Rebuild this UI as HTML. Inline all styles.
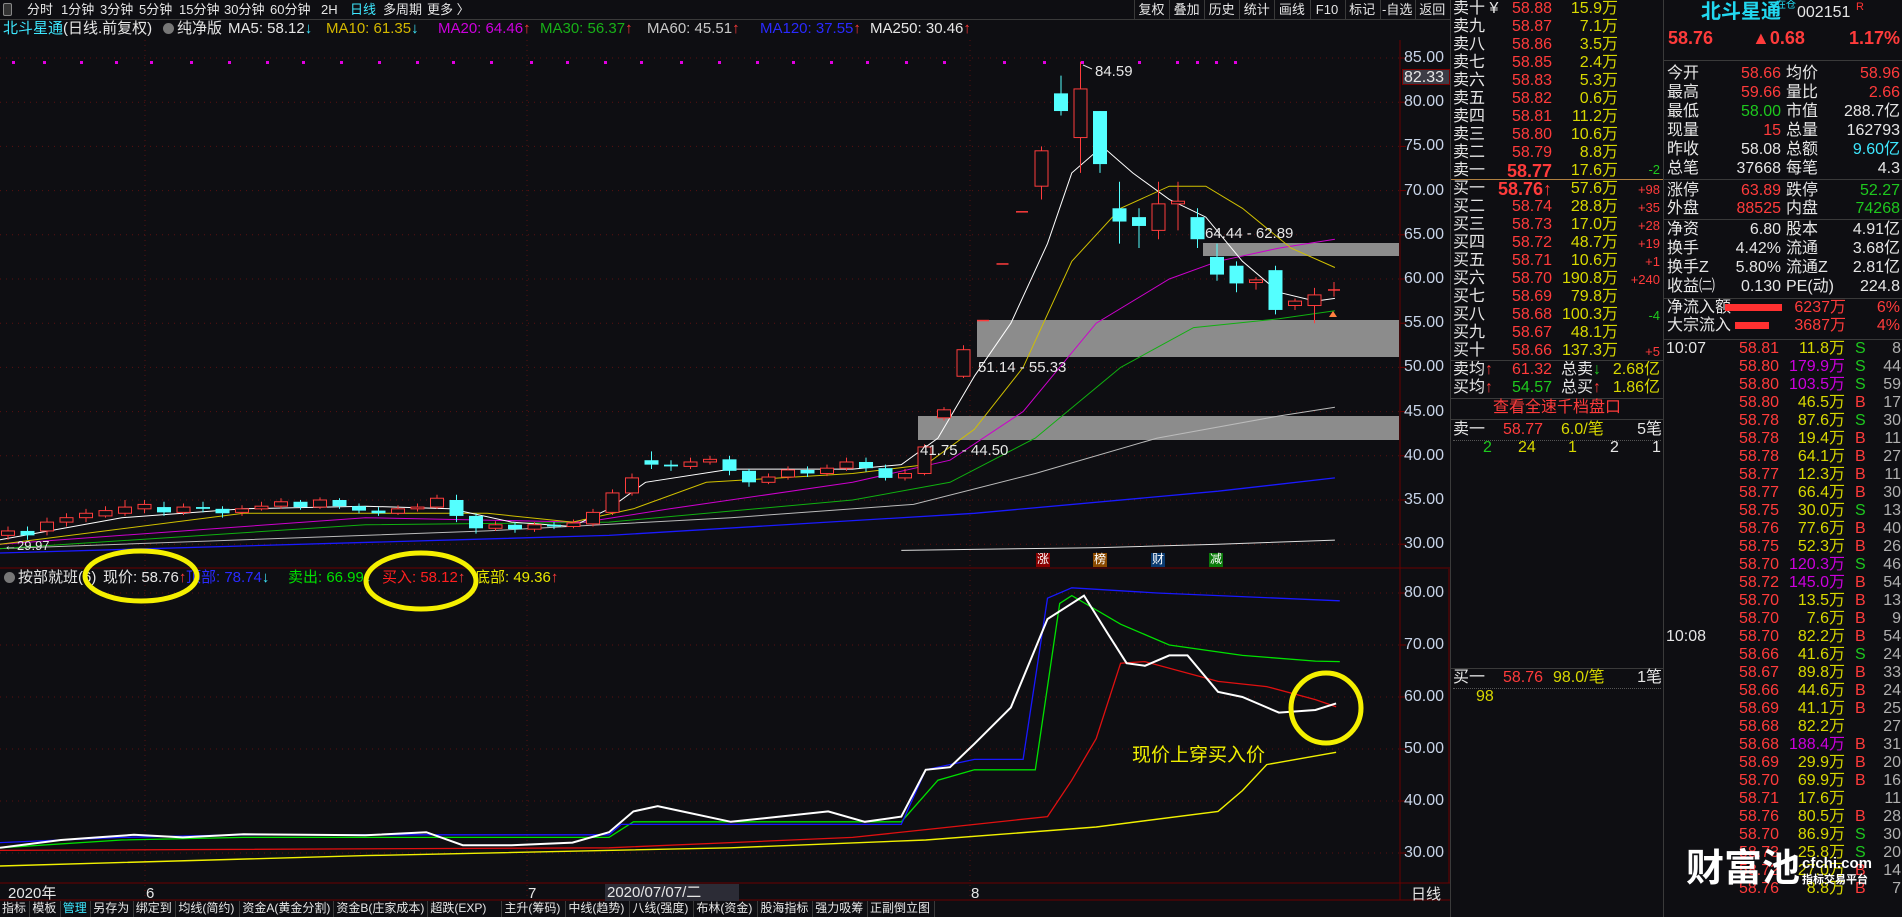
<!DOCTYPE html>
<html><head><meta charset="utf-8">
<style>
*{margin:0;padding:0;box-sizing:border-box}
body{width:1902px;height:917px;background:#0e0e12;overflow:hidden;position:relative;font-family:"Liberation Sans","Noto Sans CJK SC",sans-serif;color:#d0d0d0}
.a{position:absolute;white-space:nowrap;line-height:1}
.t13{font-size:13px}.t15{font-size:15px}.t16{font-size:16px}
.r{text-align:right}
.W{color:#e6e6e6}.R{color:#ff3b3b}.Y{color:#d8d800}.G{color:#1ec81e}.C{color:#3ee8ff}.M{color:#cc00dd}.B{color:#2a2aff}.GR{color:#b0b0b0}
.hl{position:absolute;height:1px;background:#3a3a3a}
.vl{position:absolute;width:1px;background:#3a3a3a}
</style></head><body>
<svg id="ch" class="a" style="left:0;top:0" width="1902" height="917"></svg>

<div class="a" style="left:3px;top:3px;width:9px;height:13px;border:1px solid #888;border-radius:2px;background:#333"></div>
<div class="a t13 W" style="left:27px;top:3px">分时</div>
<div class="a t13 W" style="left:61px;top:3px">1分钟</div>
<div class="a t13 W" style="left:100px;top:3px">3分钟</div>
<div class="a t13 W" style="left:139px;top:3px">5分钟</div>
<div class="a t13 W" style="left:179px;top:3px">15分钟</div>
<div class="a t13 W" style="left:224px;top:3px">30分钟</div>
<div class="a t13 W" style="left:270px;top:3px">60分钟</div>
<div class="a t13 W" style="left:321px;top:3px">2H</div>
<div class="a t13 C" style="left:350px;top:3px">日线</div>
<div class="a t13 W" style="left:383px;top:3px">多周期</div>
<div class="a t13 W" style="left:427px;top:3px">更多 〉</div>
<div id="btns"></div>
<div class="hl" style="left:0;top:19px;width:1450px"></div>

<div class="a t15" style="left:3px;top:21px"><span class="C">北斗星通</span><span class="W">(日线.前复权)</span></div>
<div class="a" style="left:163px;top:23px;width:11px;height:11px;border-radius:50%;background:#777"></div>
<div class="a t15 W" style="left:177px;top:21px">纯净版</div>
<div class="a t15" style="left:228px;top:21px"><span class="W">MA5: 58.12</span><span class="C">↓</span></div>
<div class="a t15" style="left:326px;top:21px"><span style="color:#d4b800">MA10: 61.35</span><span class="C">↓</span></div>
<div class="a t15" style="left:438px;top:21px"><span class="M">MA20: 64.46</span><span class="R">↑</span></div>
<div class="a t15" style="left:540px;top:21px"><span style="color:#18b018">MA30: 56.37</span><span class="R">↑</span></div>
<div class="a t15" style="left:647px;top:21px"><span style="color:#c8c8c8">MA60: 45.51</span><span class="R">↑</span></div>
<div class="a t15" style="left:760px;top:21px"><span class="B">MA120: 37.55</span><span class="R">↑</span></div>
<div class="a t15" style="left:870px;top:21px"><span class="W">MA250: 30.46</span><span class="R">↑</span></div>

<div class="a t15 W" style="left:1095px;top:64px">84.59</div>
<div class="a t15 W" style="left:1205px;top:226px">64.44 - 62.89</div>
<div class="a t15 W" style="left:978px;top:360px">51.14 - 55.33</div>
<div class="a t15 W" style="left:920px;top:443px">41.75 - 44.50</div>
<div class="a t13 W" style="left:4px;top:539px">←29.97</div>
<div id="ax"></div>
<div class="a t16 W" style="left:1402px;top:69px;width:48px;height:16px;background:#3c3c46;border:1px solid #700;padding-left:1px">82.33</div>

<div class="a" style="left:1036px;top:553px;width:14px;height:14px;background:#8a0000;color:#fff;font-size:12px;text-align:center">涨</div>
<div class="a" style="left:1093px;top:553px;width:14px;height:14px;background:#8a4a00;color:#fff;font-size:12px;text-align:center">榜</div>
<div class="a" style="left:1151px;top:553px;width:14px;height:14px;background:#0a3a70;color:#fff;font-size:12px;text-align:center">财</div>
<div class="a" style="left:1209px;top:553px;width:14px;height:14px;background:#0a7a0a;color:#fff;font-size:12px;text-align:center">减</div>

<div class="a" style="left:4px;top:572px;width:11px;height:11px;border-radius:50%;background:#777"></div>
<div class="a t15 W" style="left:18px;top:570px">按部就班(6)</div>
<div class="a t15" style="left:103px;top:570px"><span class="W">现价: 58.76</span><span class="R">↑</span></div>
<div class="a t15" style="left:186px;top:570px"><span class="B">顶部: 78.74</span><span class="C">↓</span></div>
<div class="a t15" style="left:288px;top:570px"><span style="color:#00e000">卖出: 66.99</span><span class="C">↓</span></div>
<div class="a t15" style="left:382px;top:570px"><span style="color:#ff2020">买入: 58.12</span><span class="R">↑</span></div>
<div class="a t15" style="left:475px;top:570px"><span style="color:#e8e800">底部: 49.36</span><span class="R">↑</span></div>
<svg class="a" style="left:0;top:540px" width="560" height="100">
<ellipse cx="141" cy="36" rx="56" ry="25" fill="none" stroke="#f5f000" stroke-width="5"/>
<ellipse cx="421" cy="41" rx="55" ry="28" fill="none" stroke="#f5f000" stroke-width="5"/>
</svg>
<div class="a" style="left:1132px;top:746px;font-size:19px;color:#f0f000">现价上穿买入价</div>

<div class="a t15 W" style="left:8px;top:886px">2020年</div>
<div class="a t15 W" style="left:146px;top:886px">6</div>
<div class="a t15 W" style="left:528px;top:886px">7</div>
<div class="a t15 W" style="left:605px;top:884px;background:#2c2c36;padding:1px 2px;width:134px">2020/07/07/二</div>
<div class="a t15 W" style="left:971px;top:886px">8</div>
<div class="a t15 W" style="left:1411px;top:887px">日线</div>
<div id="tabs"></div>

<div class="vl" style="left:1450px;top:0;height:917px"></div>
<div class="vl" style="left:1663px;top:0;height:917px"></div>
<div id="ob"></div>
<div class="hl" style="left:1451px;top:179px;width:212px;background:#b08040"></div>
<div class="hl" style="left:1451px;top:360px;width:212px"></div>
<div class="hl" style="left:1451px;top:398px;width:212px"></div>
<div class="hl" style="left:1451px;top:419px;width:212px"></div>
<div class="a t16 R" style="left:1451px;top:400px;width:212px;text-align:center">查看全速千档盘口</div>
<div class="a t16 W" style="left:1453px;top:422px">卖一</div>
<div class="a t16 R r" style="left:1490px;top:422px;width:53px">58.77</div>
<div class="a t16 Y" style="left:1561px;top:422px">6.0/笔</div>
<div class="a t16 W r" style="left:1620px;top:422px;width:42px">5笔</div>
<div class="hl" style="left:1453px;top:440px;width:208px;background:none;border-top:1px dotted #555"></div>
<div class="a t16 G" style="left:1483px;top:440px">2</div>
<div class="a t16 Y" style="left:1518px;top:440px">24</div>
<div class="a t16 Y" style="left:1568px;top:440px">1</div>
<div class="a t16 W" style="left:1610px;top:440px">2</div>
<div class="a t16 W" style="left:1652px;top:440px">1</div>
<div class="hl" style="left:1451px;top:668px;width:212px"></div>
<div class="a t16 W" style="left:1453px;top:670px">买一</div>
<div class="a t16 R r" style="left:1490px;top:670px;width:53px">58.76</div>
<div class="a t16 Y" style="left:1553px;top:670px">98.0/笔</div>
<div class="a t16 W r" style="left:1620px;top:670px;width:42px">1笔</div>
<div class="hl" style="left:1453px;top:688px;width:208px;background:none;border-top:1px dotted #555"></div>
<div class="a t16 Y" style="left:1476px;top:689px">98</div>

<div class="a" style="left:1701px;top:2px;font-size:20px;font-weight:bold;color:#22d8f0">北斗星通</div>
<div class="a" style="left:1776px;top:1px;font-size:10px;color:#22d8f0">在仓</div>
<div class="a t16 W" style="left:1797px;top:5px">002151</div>
<div class="a" style="left:1856px;top:2px;font-size:11px;color:#f33">R</div>
<div class="a R" style="left:1668px;top:29px;font-size:18px;font-weight:bold">58.76</div>
<div class="a R" style="left:1752px;top:29px;font-size:18px;font-weight:bold">▲0.68</div>
<div class="a R r" style="left:1820px;top:29px;width:80px;font-size:18px;font-weight:bold">1.17%</div>
<div class="hl" style="left:1664px;top:60px;width:238px"></div>
<div class="hl" style="left:1664px;top:179px;width:238px"></div>
<div class="hl" style="left:1664px;top:219px;width:238px"></div>
<div class="hl" style="left:1664px;top:298px;width:238px"></div>
<div class="hl" style="left:1664px;top:339px;width:238px"></div>
<div id="info"></div>
<div class="a t16 W" style="left:1667px;top:300px">净流入额</div>
<div class="a" style="left:1725px;top:304px;width:57px;height:7px;background:#ff3030"></div>
<div class="a t16 R r" style="left:1780px;top:300px;width:66px">6237万</div>
<div class="a t16 R r" style="left:1860px;top:300px;width:40px">6%</div>
<div class="a t16 W" style="left:1667px;top:318px">大宗流入</div>
<div class="a" style="left:1735px;top:322px;width:34px;height:7px;background:#ff3030"></div>
<div class="a t16 R r" style="left:1780px;top:318px;width:66px">3687万</div>
<div class="a t16 R r" style="left:1860px;top:318px;width:40px">4%</div>
<div id="ticks"></div>
<div class="a" style="left:1686px;top:850px;font-size:38px;font-weight:bold;color:#fff">财富池</div>
<div class="a" style="left:1802px;top:856px;font-size:15px;font-weight:bold;color:#fff">cfchi.com</div>
<div class="a" style="left:1802px;top:875px;font-size:11px;font-weight:bold;color:#fff">指标交易平台</div>

<script>
var svg=document.getElementById('ch'),h='';
function P(p){return 58+(85-p)*8.84}
function I(v){return 593+(80-v)*5.2}
for(var p=85;p>=30;p-=5)h+='<line x1="0" x2="1399" y1="'+P(p)+'" y2="'+P(p)+'" stroke="#5a1010" stroke-dasharray="1,5"/>';
for(var v=80;v>=30;v-=10)h+='<line x1="0" x2="1399" y1="'+I(v)+'" y2="'+I(v)+'" stroke="#5a1010" stroke-dasharray="1,5"/>';
[145,527,970].forEach(function(x){h+='<line x1="'+x+'" x2="'+x+'" y1="40" y2="900" stroke="#5a1010" stroke-dasharray="1,4"/>'});
h+='<line x1="0" x2="1450" y1="568" y2="568" stroke="#6a0000"/><line x1="0" x2="1450" y1="883" y2="883" stroke="#6a0000"/><line x1="0" x2="1450" y1="900" y2="900" stroke="#6a0000"/>';
h+='<line x1="1400" x2="1400" y1="40" y2="900" stroke="#6a0000"/><line x1="1449" x2="1449" y1="569" y2="883" stroke="#6a0000"/>';
for(var p=85;p>=30;p-=5)h+='<line x1="1400" x2="1406" y1="'+P(p)+'" y2="'+P(p)+'" stroke="#6a0000"/>';
h+='<rect x="1203" y="243" width="196" height="13" fill="#8c8c8c"/>';
h+='<rect x="977" y="320" width="422" height="37" fill="#8c8c8c"/>';
h+='<rect x="918" y="416" width="481" height="24" fill="#8c8c8c"/>';
[12,43,80,115,150,190,228,266,302,340,378,416,452,490,530,566,604,640,680,718,756,792,830,866,905,943,1003,1043,1081,1138,1176,1196,1215,1234].forEach(function(x){h+='<rect x="'+x+'" y="61" width="3" height="3" fill="#e000e0"/>'});
function L(pts,c,f,w){var s=pts.map(function(q){return (q[0]*1.218).toFixed(1)+','+f(q[1]).toFixed(1)}).join(' ');h+='<polyline points="'+s+'" fill="none" stroke="'+c+'" stroke-width="'+(w||1)+'"/>'}
L([[0,29],[500,31],[800,33.5],[1000,36],[1096,37.5]],'#1a1aff',P,1.3);
L([[740,29.3],[900,29.6],[1000,30],[1096,30.46]],'#dddddd',P);
L([[0,29.5],[400,31.5],[600,33],[750,34.5],[850,38],[950,42],[1050,44.5],[1096,45.5]],'#bbbbbb',P);
L([[0,29.5],[300,32.2],[500,32.5],[700,35],[780,37],[850,42],[920,50],[980,54.5],[1050,55.5],[1096,56.4]],'#10b010',P);
L([[0,30],[300,33],[480,32.5],[550,34],[700,37],[780,39.5],[840,45],[900,55],[960,60],[1000,62],[1050,63.5],[1096,64.5]],'#cc00cc',P);
L([[0,30],[200,33.5],[400,33.5],[470,32.5],[520,34],[580,37],[700,38],[760,39],[800,43],[840,50],[880,62],[920,68],[960,70.5],[990,70.5],[1020,68],[1060,63.5],[1096,61.3]],'#d0c000',P);
L([[0,30.5],[100,33],[200,34],[300,34.3],[370,34],[420,32.5],[470,32],[500,34],[530,37],[600,38.5],[700,38.5],[740,39],[770,42],[800,49],[830,55],[860,64],[880,72],[905,75],[930,72],[960,69],[990,67],[1020,62],[1050,58.5],[1080,57.5],[1096,57.8]],'#ffffff',P);
var C=[[31,31.5,32,30.5],[31.5,31,32,30.5],[31.5,32.5,33,31],[32.5,33,33.5,32],[33,33.5,34,32.5],[33.2,33.8,34.3,33],[33.5,34.2,35,33.2],[34,34.5,35,33.5],[34.2,33.6,34.8,33.2],[33.6,34.2,34.6,33.3],[34.2,34,34.8,33.6],[34,33.5,34.3,33],[33.6,34,34.4,33.2],[34,34.3,34.8,33.8],[34.3,34.8,35.2,34],[34.8,34.2,35,33.9],[34.2,35,35.3,34],[35,34.3,35.2,34],[34.3,33.8,34.6,33.5],[33.8,33.5,34.2,33.2],[33.5,34,34.4,33.3],[34,34.2,34.6,33.7],[34.2,35.2,35.6,34],[35,33.2,35.6,32.5],[33.2,31.8,33.5,31.2],[31.8,32.2,32.6,31.5],[32.2,31.7,32.5,31.3],[31.7,32.2,32.5,31.4],[32.2,32,32.5,31.7],[32,32.4,32.8,31.8],[32.3,33.6,34,32],[33.6,35.8,36.2,33.3],[35.8,37.5,38,35.5],[39.5,39,40.5,38.5],[39,38.8,39.5,38.3],[38.8,39.3,39.8,38.5],[39.3,39.6,40,39],[39.6,38.3,40,37.8],[38.3,37,38.5,36.5],[37,37.6,38,36.8],[37.6,38.4,38.8,37.3],[38.4,38,38.8,37.6],[38,38.6,39,37.7],[38.6,39.3,39.8,38.3],[39.3,38.6,39.8,38.2],[38.6,37.5,39,37.2],[37.5,38,38.5,37.2],[38,41,41.3,37.8],[44.3,45.2,45.5,44],[49,52,52.5,48.8],[55.3,55.3,55.3,55.3],[61.7,61.7,61.7,61.7],[67.6,67.6,67.6,67.6],[70.5,74.5,75,69],[81,79,83,78.5],[76,81.5,84.59,72],[79,73,79,72],[68,66.5,71,64],[67,66,68,63.5],[65.5,68.5,71,64.5],[68.5,68.8,71,65.5],[67,64.5,68,63.5],[62.5,60.5,64,59.8],[61.5,59.5,62,58.5],[59.6,59.9,60.2,58.8],[61,56.5,61.5,56],[57,57.5,57.8,56.5],[57,58.2,59,55],[58.66,58.76,59.66,58]];
C.forEach(function(c,i){var x=8+i*19.5,o=c[0],cl=c[1],up=cl>=o,col=up?'#ff3c3c':'#54ffff';
 var t=P(Math.max(o,cl)),b=P(Math.min(o,cl));
 h+='<line x1="'+x+'" x2="'+x+'" y1="'+P(c[2])+'" y2="'+P(c[3])+'" stroke="'+col+'"/>';
 if(b-t<1.5)h+='<line x1="'+(x-6)+'" x2="'+(x+6)+'" y1="'+t+'" y2="'+t+'" stroke="'+col+'" stroke-width="1.5"/>';
 else if(up)h+='<rect x="'+(x-6.5)+'" y="'+t+'" width="13" height="'+(b-t)+'" fill="#0e0e12" stroke="'+col+'"/>';
 else h+='<rect x="'+(x-7)+'" y="'+t+'" width="14" height="'+(b-t)+'" fill="'+col+'"/>';});
h+='<polygon points="1333,311 1329,317 1337,317" fill="#ff8040"/>';
h+='<line x1="1083" y1="65" x2="1092" y2="69" stroke="#ddd"/>';
L([[0,27.5],[300,29.5],[600,31],[760,32.5],[900,35],[1000,38],[1020,42],[1040,47],[1097,49.36]],'#f0f000',I,1.4);
L([[0,30.5],[500,31],[700,33],[760,34.5],[860,37],[880,44],[900,52],[920,66.5],[940,66.8],[1000,63],[1040,62],[1080,59.5],[1097,58.12]],'#e01010',I,1.3);
L([[0,31],[100,32.5],[200,33],[500,33],[520,36],[740,36],[770,44],[800,46],[850,46],[870,78],[880,79.5],[920,74],[960,70],[1020,68],[1080,66.9],[1100,66.8]],'#00e000',I,1.3);
L([[0,32],[100,33],[200,33.5],[500,33.5],[510,35.5],[740,35.5],[760,46],[800,48],[840,48],[860,79],[880,81],[950,80],[1100,78.5]],'#1818ff',I,1.3);
L([[0,31],[50,32.5],[80,33],[110,33.5],[150,33],[200,33.6],[250,33.5],[300,33.4],[350,34],[380,31.5],[420,31.5],[470,32],[500,34],[520,38],[540,39],[560,38],[600,36],[640,37],[680,38],[710,36],[740,37],[760,46],[780,46.5],[800,51],[830,58],[860,75],[890,79.5],[910,72],[925,66.5],[940,66],[960,68],[975,68],[1000,61],[1020,60],[1050,57],[1080,57.5],[1097,58.76]],'#ffffff',I,2);
h+='<circle cx="1326" cy="708" r="35" fill="none" stroke="#f5f000" stroke-width="5"/>';
for(var v=80;v>=30;v-=10)h+='<line x1="1400" x2="1406" y1="'+I(v)+'" y2="'+I(v)+'" stroke="#6a0000"/>';
svg.innerHTML=h;
function D(x,y,cls,txt,w,right){return '<div class="a t16 '+cls+(right?' r':'')+'" style="left:'+x+'px;top:'+y+'px;'+(w?'width:'+w+'px':'')+'">'+txt+'</div>'}
var a='';
for(var p=85;p>=30;p-=5)a+=D(1404,P(p)-8,'W',p.toFixed(2));
for(var v=80;v>=30;v-=10)a+=D(1404,I(v)-8,'W',v.toFixed(2));
document.getElementById('ax').innerHTML=a.replace(/class="a t16 W"/g,'class="a t16" ').replace(/style="/g,'style="color:#c8d4e8;');
var b='',bn=['复权','叠加','历史','统计','画线','F10','标记','-自选','返回'];
bn.forEach(function(t,i){var x=1134+i*35.1;b+='<div class="a t13 W" style="left:'+x+'px;top:3px;width:35px;text-align:center">'+t+'</div><div class="vl" style="left:'+x+'px;top:0;height:19px"></div>'});
document.getElementById('btns').innerHTML=b;
var tb='',tn=['指标','模板','管理','另存为','绑定到','均线(简约)','资金A(黄金分割)','资金B(庄家成本)','超跌(EXP)','主升(筹码)','中线(趋势)','八线(强度)','布林(资金)','股海指标','强力吸筹','正副倒立图'],x=2;
tn.forEach(function(t){var w=t.length*12.2+6;if(/[A-Za-z(]/.test(t))w=t.length*10+4;tb+='<div class="a t13 '+(t=='管理'?'C':'W')+'" style="left:'+x+'px;top:902px;font-size:12px">'+t+'</div>';x+=w;tb+='<div class="vl" style="left:'+(x-3)+'px;top:901px;height:16px"></div>'});
document.getElementById('tabs').innerHTML=tb;
var o='',sl=['卖十','卖九','卖八','卖七','卖六','卖五','卖四','卖三','卖二','卖一'],sp=['58.88','58.87','58.86','58.85','58.83','58.82','58.81','58.80','58.79','58.77'],sv=['15.9万','7.1万','3.5万','2.4万','5.3万','0.6万','11.2万','10.6万','8.8万','17.6万'];
var bl=['买一','买二','买三','买四','买五','买六','买七','买八','买九','买十'],bp=['58.76','58.74','58.73','58.72','58.71','58.70','58.69','58.68','58.67','58.66'],bv=['57.6万','28.8万','17.0万','48.7万','10.6万','190.8万','79.8万','100.3万','48.1万','137.3万'],bd=['+98','+35','+28','+19','+1','+240','','-4','','+5'];
for(var i=0;i<10;i++){var y=i*18+1;o+=D(1453,y,'W',sl[i]+(i==0?' ¥':''))+'<div class="a t16 R r" style="left:1490px;top:'+y+'px;width:62px;'+(i==9?'font-weight:bold;font-size:18px;top:'+(y-1)+'px':'')+'">'+sp[i]+'</div>'+D(1555,y,'Y',sv[i],63,1);}
o+=D(1620,163,'G','-2',40,1).replace('t16','t13');
for(var i=0;i<10;i++){var y=180+i*18+1;o+=D(1453,y,'W',bl[i])+'<div class="a t16 R r" style="left:1480px;top:'+y+'px;width:72px;'+(i==0?'font-weight:bold;font-size:18px;top:'+(y-1)+'px':'')+'">'+bp[i]+(i==0?'↑':'')+'</div>'+D(1555,y,'Y',bv[i],63,1)+'<div class="a t13 r '+(bd[i][0]=='-'?'G':'R')+'" style="left:1620px;top:'+(y+2)+'px;width:40px">'+bd[i]+'</div>';}
o+=D(1453,362,'W','卖均<span class="R">↑</span>')+D(1490,362,'R','61.32',62,1)+D(1561,362,'W','总卖<span class="G">↓</span>')+D(1600,362,'Y','2.68亿',60,1);
o+=D(1453,380,'W','买均<span class="R">↑</span>')+D(1490,380,'G','54.57',62,1)+D(1561,380,'W','总买<span class="R">↑</span>')+D(1600,380,'Y','1.86亿',60,1);
document.getElementById('ob').innerHTML=o;
var f='',rows=[['今开','58.66','R','均价','58.96','R'],['最高','59.66','R','量比','2.66','R'],['最低','58.00','G','市值','288.7亿','W'],['现量','15','R','总量','162793','W'],['昨收','58.08','W','总额','9.60亿','C'],['总笔','37668','W','每笔','4.3','W']];
rows.forEach(function(r,i){var y=66+i*19;f+=D(1667,y,'W',r[0])+D(1700,y,r[2],r[1],81,1)+D(1786,y,'W',r[3])+D(1820,y,r[5],r[4],80,1)});
[['涨停','63.89','R','跌停','52.27','G'],['外盘','88525','R','内盘','74268','G']].forEach(function(r,i){var y=183+i*18;f+=D(1667,y,'W',r[0])+D(1700,y,r[2],r[1],81,1)+D(1786,y,'W',r[3])+D(1820,y,r[5],r[4],80,1)});
[['净资','6.80','股本','4.91亿'],['换手','4.42%','流通','3.68亿'],['换手Z','5.80%','流通Z','2.81亿'],['收益㈡','0.130','PE(动)','224.8']].forEach(function(r,i){var y=222+i*19;f+=D(1667,y,'W',r[0])+D(1700,y,'W',r[1],81,1)+D(1786,y,'W',r[2])+D(1820,y,'W',r[3],80,1)});
document.getElementById('info').innerHTML=f;
var tk=[['58.81','11.8万','S','8'],['58.80','179.9万','S','44'],['58.80','103.5万','S','59'],['58.80','46.5万','B','17'],['58.78','87.6万','S','30'],['58.78','19.4万','B','11'],['58.78','64.1万','B','27'],['58.77','12.3万','B','11'],['58.77','66.4万','B','30'],['58.75','30.0万','S','13'],['58.76','77.6万','B','40'],['58.75','52.3万','B','26'],['58.70','120.3万','S','46'],['58.72','145.0万','B','54'],['58.70','13.5万','B','13'],['58.70','7.6万','B','9'],
['58.70','82.2万','B','54'],['58.66','41.6万','S','24'],['58.67','89.8万','B','33'],['58.66','44.6万','B','24'],['58.69','41.1万','B','25'],['58.68','82.2万','','27'],['58.68','188.4万','B','31'],['58.69','29.9万','B','20'],['58.70','69.9万','B','16'],['58.71','17.6万','','11'],['58.76','80.5万','B','28'],['58.70','86.9万','S','30'],['58.73','25.8万','S','20'],['58.72','27.0万','B','14'],['58.76','8.8万','B','7']];
var k='';
tk.forEach(function(r,i){var y=341+i*18;if(i==0)k+=D(1666,y,'W','10:07');if(i==16)k+=D(1666,y,'W','10:08');
 var vc=parseFloat(r[1])>100?'M':'Y';k+=D(1720,y,'R',r[0],59,1)+D(1775,y,vc,r[1],70,1)+D(1855,y,r[2]=='B'?'R':'G',r[2])+D(1870,y,'GR',r[3],31,1)});
document.getElementById('ticks').innerHTML=k;
</script>
</body></html>
